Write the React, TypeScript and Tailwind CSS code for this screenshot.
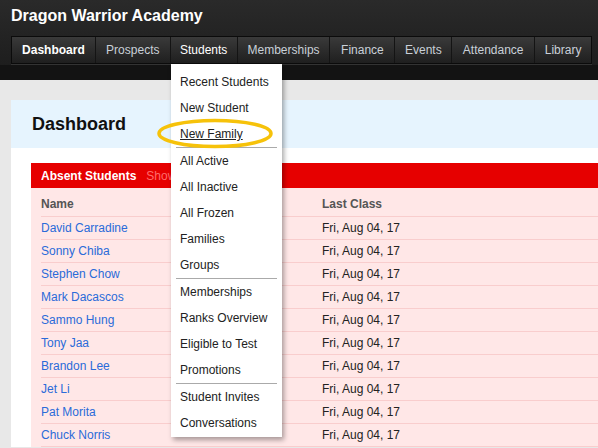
const navItems = [
  { label: "Dashboard", w: "w-[84px]", cls: "font-bold text-white" },
  { label: "Prospects", w: "w-[75px]", cls: "text-[#c9d0d8]" },
  { label: "Students", w: "w-[67px]", cls: "text-white" },
  { label: "Memberships", w: "w-[93px]", cls: "text-[#c9d0d8]" },
  { label: "Finance", w: "w-[65px]", cls: "text-[#c9d0d8]" },
  { label: "Events", w: "w-[57px]", cls: "text-[#c9d0d8]" },
  { label: "Attendance", w: "w-[83px]", cls: "text-[#c9d0d8]" },
  { label: "Library", w: "w-[56px]", cls: "text-[#c9d0d8]" },
];

// groups split by the grey rule
const menuGroups = [
  ["Recent Students", "New Student", "New Family"],
  ["All Active", "All Inactive", "All Frozen", "Families", "Groups"],
  ["Memberships", "Ranks Overview", "Eligible to Test", "Promotions"],
  ["Student Invites", "Conversations"],
];

const students = [
  "David Carradine",
  "Sonny Chiba",
  "Stephen Chow",
  "Mark Dacascos",
  "Sammo Hung",
  "Tony Jaa",
  "Brandon Lee",
  "Jet Li",
  "Pat Morita",
  "Chuck Norris",
];

export default function App() {
  return (
    <div className="relative w-[598px] h-[448px] overflow-hidden bg-[#e8e8e8] font-['Liberation_Sans',Arial,sans-serif]">
      {/* Top bar */}
      <header className="bg-gradient-to-b from-[#2a2a2a] to-[#1b1b1b] pt-[6px]">
        <h1 className="pl-[11px] text-[16px] font-bold text-white leading-[20px] h-[30px]">
          Dragon Warrior Academy
        </h1>
        <nav className="ml-[11px] w-[581px] flex h-[28px] border border-[#0b0b0b] bg-[#222]">
          {navItems.map((item) => (
            <div
              key={item.label}
              className={`${item.w} flex items-center justify-center border-r border-[#141414] last:border-r-0 bg-gradient-to-b from-[#3a3a3a] to-[#1f1f1f] text-[12px] ${item.cls}`}
            >
              {item.label}
            </div>
          ))}
        </nav>
        <div className="ml-[11px] w-[581px] h-px bg-[#333]" />
        <div className="h-[15px] bg-[#131313]" />
      </header>

      {/* Page body */}
      <main className="pt-[20px] pl-[11px]">
        <div className="bg-white">
          <div className="h-[48px] bg-[#e6f4fe] flex items-center pl-[21px]">
            <h2 className="text-[18px] font-bold text-[#111]">Dashboard</h2>
          </div>
          <div className="pt-[15px] pl-[20px]">
            <div className="h-[25px] bg-[#e60000] flex items-center pl-[10px] text-[12px]">
              <span className="font-bold text-white">Absent Students</span>
              <span className="ml-[10px] text-[#ff6b6b]">Show</span>
            </div>
            <div className="bg-[#ffe7e7] pl-[10px]">
              <div className="h-[29px] flex items-center pt-[3px] border-b border-[#f9cdcd] text-[12px] font-bold text-[#555]">
                <span className="w-[281px]">Name</span>
                <span>Last Class</span>
              </div>
              {students.map((name) => (
                <div
                  key={name}
                  className="h-[23px] flex items-center border-b border-[#f9cdcd] text-[12px]"
                >
                  <span className="w-[281px] text-[#2a6bd9]">{name}</span>
                  <span className="text-[#222]">Fri, Aug 04, 17</span>
                </div>
              ))}
            </div>
          </div>
        </div>
      </main>

      {/* Students dropdown */}
      <div className="absolute left-[171px] top-[64px] w-[111px] bg-white pt-[5px] pb-[1px] shadow-[2px_3px_5px_rgba(0,0,0,0.35)]">
        {menuGroups.map((group, gi) => (
          <div key={gi} className={gi > 0 ? "border-t border-[#aaa] mx-[5px]" : "mx-[5px]"}>
            {group.map((label) => (
              <div
                key={label}
                className={`h-[26px] flex items-center pl-[4px] text-[12px] text-[#222] ${label === "New Family" ? "underline" : ""}`}
              >
                {label}
              </div>
            ))}
          </div>
        ))}
      </div>

      {/* yellow highlight around New Family */}
      <svg className="absolute left-[156px] top-[118px]" width="120" height="32" viewBox="0 0 120 32">
        <ellipse cx="59" cy="15.5" rx="56" ry="13" fill="none" stroke="#f6c20a" strokeWidth="3.5" />
      </svg>
    </div>
  );
}
